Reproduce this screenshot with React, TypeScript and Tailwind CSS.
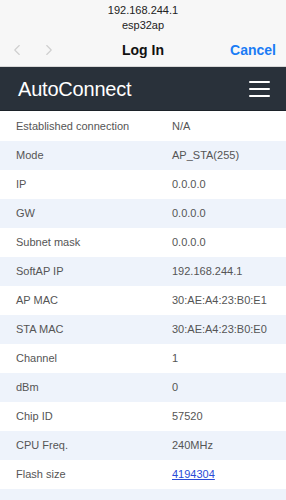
import { ChevronLeft, ChevronRight } from 'lucide-react'

const rows: [string, string][] = [
  ['Established connection', 'N/A'],
  ['Mode', 'AP_STA(255)'],
  ['IP', '0.0.0.0'],
  ['GW', '0.0.0.0'],
  ['Subnet mask', '0.0.0.0'],
  ['SoftAP IP', '192.168.244.1'],
  ['AP MAC', '30:AE:A4:23:B0:E1'],
  ['STA MAC', '30:AE:A4:23:B0:E0'],
  ['Channel', '1'],
  ['dBm', '0'],
  ['Chip ID', '57520'],
  ['CPU Freq.', '240MHz'],
  ['Flash size', '4194304'],
  ['', ''],
]

export default function App() {
  return (
    <div className="w-[286px] h-[500px] overflow-hidden bg-white font-['Liberation_Sans',Arial,sans-serif]">
      <div className="h-[67px] bg-[#f7f7f7] border-b border-[#d8d8d8] flex flex-col">
        <div className="pt-[3px] text-center text-[11px] leading-[15px] text-[#222]">
          <div>192.168.244.1</div>
          <div>esp32ap</div>
        </div>
        <div className="flex items-center h-[22px] mt-[6px] px-[8px]">
          <div className="flex items-center gap-[14px] text-[#cfcfcf] w-[70px]">
            <ChevronLeft className="w-[18px] h-[18px]" strokeWidth={1.5} />
            <ChevronRight className="w-[18px] h-[18px]" strokeWidth={1.5} />
          </div>
          <div className="flex-1 text-center text-[14px] font-semibold text-[#111]">Log In</div>
          <div className="w-[70px] text-right text-[14px] font-semibold text-[#1a7cf5] pr-[2px]">Cancel</div>
        </div>
      </div>
      <div className="h-[44px] bg-[#29313a] flex items-center justify-between pl-[18px] pr-[16px] border-b border-[#1c2229]">
        <span className="text-white text-[20px] tracking-[-0.2px]">AutoConnect</span>
        <div className="flex flex-col gap-[5px] pt-[1px]">
          <span className="block w-[21px] h-[2px] bg-white rounded-sm" />
          <span className="block w-[21px] h-[2px] bg-white rounded-sm" />
          <span className="block w-[21px] h-[2px] bg-white rounded-sm" />
        </div>
      </div>
      <div className="pt-[1px]">
        {rows.map(([k, v], i) => (
          <div
            key={i}
            className={`flex items-center h-[29px] text-[11px] text-[#555] ${i % 2 === 1 ? 'bg-[#eef3fb]' : 'bg-white'}`}
          >
            <div className="w-[172px] pl-[16px]">{k}</div>
            <div>
              {k === 'Flash size' ? (
                <a className="text-[#2a4bd7] underline">{v}</a>
              ) : (
                v
              )}
            </div>
          </div>
        ))}
      </div>
    </div>
  )
}
